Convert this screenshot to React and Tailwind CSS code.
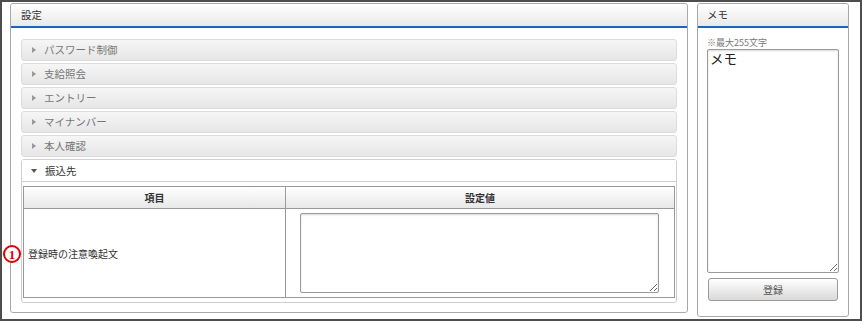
const font = {fontFamily: '"Noto Sans CJK JP", "Noto Sans", sans-serif'};

const items = ["パスワード制御", "支給照会", "エントリー", "マイナンバー", "本人確認"];

const Closed = ({label}) => (
    <div className="h-[22px] flex items-center rounded-[3px] border border-[#dcdcdc] bg-gradient-to-b from-[#f6f6f6] to-[#e6e6e6] pl-[10px]">
        <span className="w-0 h-0 border-y-[3px] border-y-transparent border-l-[4px] border-l-[#999] mr-[8px]"/>
        <span className="text-[10.5px] text-[#777]">{label}</span>
    </div>
)

const App = () => {
    return (
        <div style={font} className="relative w-[862px] h-[321px] border-2 border-[#4d4d4d] bg-white flex items-start gap-[9px] pl-[8px] pt-[1px] overflow-hidden">
            {/* left panel */}
            <div className="w-[678px] h-[310px] border border-[#a9a9a9] rounded-[3px] flex flex-col">
                <div className="h-[22px] flex items-center px-[10px] bg-gradient-to-b from-white to-[#e9e9e9] rounded-t-[3px]">
                    <span className="text-[10.5px] text-[#333]">設定</span>
                </div>
                <div className="h-[2px] bg-[#1c64b4]"/>
                <div className="px-[10px] pt-[11px] flex flex-col gap-[2px]">
                    {items.map(i => <Closed key={i} label={i}/>)}
                    {/* open item */}
                    <div className="border border-[#cfcfcf] rounded-[3px]">
                        <div className="h-[22px] flex items-center pl-[9px] border-b border-[#cfcfcf] bg-white">
                            <span className="w-0 h-0 border-x-[3px] border-x-transparent border-t-[4px] border-t-[#555] mr-[8px]"/>
                            <span className="text-[10.5px] text-[#333]">振込先</span>
                        </div>
                        <div className="pt-[4px] px-[1px] pb-[4px]">
                            <div className="border border-[#999] flex flex-col">
                                <div className="h-[22px] flex border-b border-[#999] bg-gradient-to-b from-white to-[#e8e8e8]">
                                    <div className="w-[262px] border-r border-[#999] flex items-center justify-center text-[10px] font-bold text-[#333]">項目</div>
                                    <div className="flex-1 flex items-center justify-center text-[10px] font-bold text-[#333]">設定値</div>
                                </div>
                                <div className="h-[88px] flex">
                                    <div className="w-[262px] border-r border-[#999] flex items-center pl-[4px] text-[10px] text-[#333]">登録時の注意喚起文</div>
                                    <div className="flex-1 pl-[14px] pr-[15px] py-[4px]">
                                        <textarea readOnly className="w-full h-full border border-[#9a9a9a] rounded-[2px] shadow-[inset_0_1px_2px_rgba(0,0,0,0.15)] resize-y outline-none"/>
                                    </div>
                                </div>
                            </div>
                        </div>
                    </div>
                </div>
            </div>

            {/* right panel */}
            <div className="w-[152px] h-[314px] border border-[#a9a9a9] rounded-[3px] flex flex-col">
                <div className="h-[22px] flex items-center px-[9px] bg-gradient-to-b from-white to-[#e9e9e9] rounded-t-[3px]">
                    <span className="text-[10.5px] text-[#333]">メモ</span>
                </div>
                <div className="h-[2px] bg-[#1c64b4]"/>
                <div className="px-[9px] pt-[8px] flex flex-col">
                    <span className="text-[9px] leading-[13px] text-[#777]">※最大255文字</span>
                    <textarea readOnly defaultValue="メモ" style={font}
                              className="w-[132px] h-[224px] border border-[#9a9a9a] rounded-[2px] shadow-[inset_0_1px_2px_rgba(0,0,0,0.15)] px-[2px] text-[13.5px] leading-[17px] text-[#222] resize-y outline-none"/>
                    <button type="button"
                            className="mt-[5px] ml-[1px] w-[130px] h-[23px] border border-[#9a9a9a] rounded-[3px] bg-gradient-to-b from-white to-[#d9d9d9] text-[10px] text-[#555]">登録
                    </button>
                </div>
            </div>

            {/* annotation marker */}
            <div className="absolute left-[1px] top-[243px] w-[18px] h-[18px] rounded-full border-2 border-[#e00000] bg-white flex items-center justify-center text-[13px] font-bold leading-none text-[#e00000]"
                 style={{fontFamily: '"Liberation Serif", serif'}}>1
            </div>
        </div>
    )
}

export default App
